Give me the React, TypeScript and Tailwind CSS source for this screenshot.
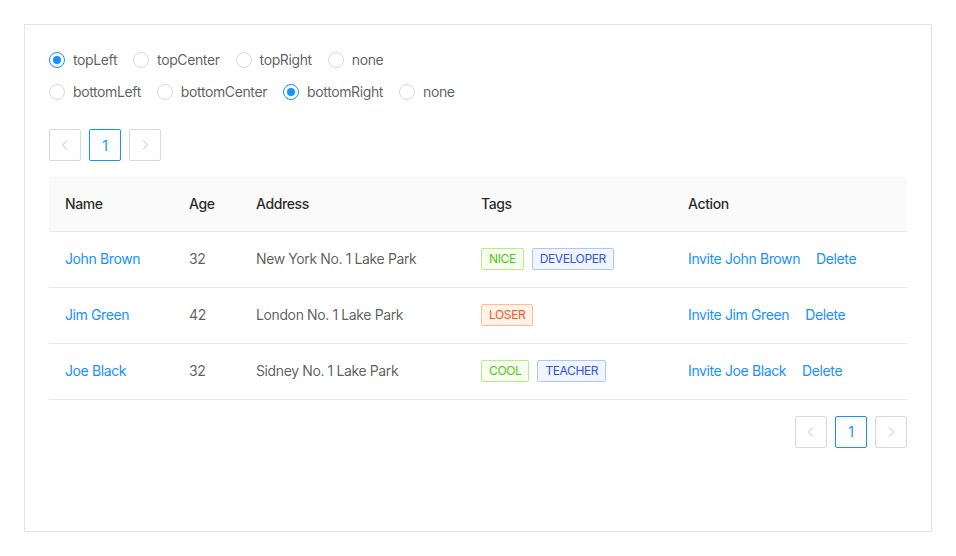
import React from "react";

type Tag = { label: string; color: "green" | "geekblue" | "volcano" };

const rows: { name: string; age: number; address: string; tags: Tag[] }[] = [
  {
    name: "John Brown",
    age: 32,
    address: "New York No. 1 Lake Park",
    tags: [
      { label: "NICE", color: "green" },
      { label: "DEVELOPER", color: "geekblue" },
    ],
  },
  {
    name: "Jim Green",
    age: 42,
    address: "London No. 1 Lake Park",
    tags: [{ label: "LOSER", color: "volcano" }],
  },
  {
    name: "Joe Black",
    age: 32,
    address: "Sidney No. 1 Lake Park",
    tags: [
      { label: "COOL", color: "green" },
      { label: "TEACHER", color: "geekblue" },
    ],
  },
];

const tagClass = {
  green: "text-[#52c41a] bg-[#f6ffed] border-[#b7eb8f]",
  geekblue: "text-[#2f54eb] bg-[#f0f5ff] border-[#adc6ff]",
  volcano: "text-[#fa541c] bg-[#fff2e8] border-[#ffbb96]",
};

const Radio: React.FC<{ label: string; checked?: boolean }> = ({ label, checked }) => (
  <label className="flex items-center mr-2 h-[22px]">
    <span
      className={
        "w-4 h-4 rounded-full border bg-white flex items-center justify-center " +
        (checked ? "border-[#1890ff]" : "border-[#d9d9d9]")
      }
    >
      {checked && <span className="w-2 h-2 rounded-full bg-[#1890ff]" />}
    </span>
    <span className="px-2 text-[14px] leading-[20px] text-[rgba(0,0,0,0.65)]">{label}</span>
  </label>
);

const Chevron: React.FC<{ dir: "left" | "right" }> = ({ dir }) => (
  <svg width="12" height="12" viewBox="0 0 12 12" fill="none" stroke="#bfbfbf" strokeWidth="1">
    {dir === "left" ? <polyline points="8 1.5 3.5 6 8 10.5" /> : <polyline points="4 1.5 8.5 6 4 10.5" />}
  </svg>
);

const Pagination: React.FC<{ className?: string }> = ({ className = "" }) => (
  <div className={"flex gap-2 " + className}>
    <div className="w-8 h-8 border border-[#d9d9d9] rounded-[2px] flex items-center justify-center">
      <Chevron dir="left" />
    </div>
    <div className="w-8 h-8 border border-[#1890ff] rounded-[2px] flex items-center justify-center text-[14px] text-[#1890ff]">
      1
    </div>
    <div className="w-8 h-8 border border-[#d9d9d9] rounded-[2px] flex items-center justify-center">
      <Chevron dir="right" />
    </div>
  </div>
);

const App: React.FC = () => {
  return (
    <div
      className="bg-white min-h-screen p-6 tracking-[-0.024em]"
      style={{ fontFamily: "Inter, 'Noto Sans', sans-serif" }}
    >
      <div className="border border-[#e3e3e3] h-[508px] p-6">
        <div className="flex">
          <Radio label="topLeft" checked />
          <Radio label="topCenter" />
          <Radio label="topRight" />
          <Radio label="none" />
        </div>
        <div className="flex mt-[10px]">
          <Radio label="bottomLeft" />
          <Radio label="bottomCenter" />
          <Radio label="bottomRight" checked />
          <Radio label="none" />
        </div>

        <Pagination className="mt-[26px]" />

        <table className="w-full mt-4 border-collapse text-[14px] leading-[22px]">
          <thead>
            <tr className="bg-[#fafafa] border-b border-[#e8e8e8] h-[54px] text-left text-[rgba(0,0,0,0.85)]">
              <th className="font-medium px-4 w-[124px]">Name</th>
              <th className="font-medium px-4 w-[67px]">Age</th>
              <th className="font-medium px-4 w-[225px]">Address</th>
              <th className="font-medium px-4 w-[207px]">Tags</th>
              <th className="font-medium px-4">Action</th>
            </tr>
          </thead>
          <tbody className="text-[rgba(0,0,0,0.65)]">
            {rows.map((r) => (
              <tr key={r.name} className="border-b border-[#e8e8e8] h-[56px]">
                <td className="px-4 text-[#1890ff]">{r.name}</td>
                <td className="px-4">{r.age}</td>
                <td className="px-4">{r.address}</td>
                <td className="px-4">
                  <div className="flex gap-2">
                    {r.tags.map((t) => (
                      <span
                        key={t.label}
                        className={"border rounded-[2px] px-[7px] h-[22px] leading-[20px] text-[12px] " + tagClass[t.color]}
                      >
                        {t.label}
                      </span>
                    ))}
                  </div>
                </td>
                <td className="px-4 text-[#1890ff]">
                  <div className="flex gap-4">
                    <span>Invite {r.name}</span>
                    <span>Delete</span>
                  </div>
                </td>
              </tr>
            ))}
          </tbody>
        </table>

        <Pagination className="mt-4 justify-end" />
      </div>
    </div>
  );
};

export default App;
